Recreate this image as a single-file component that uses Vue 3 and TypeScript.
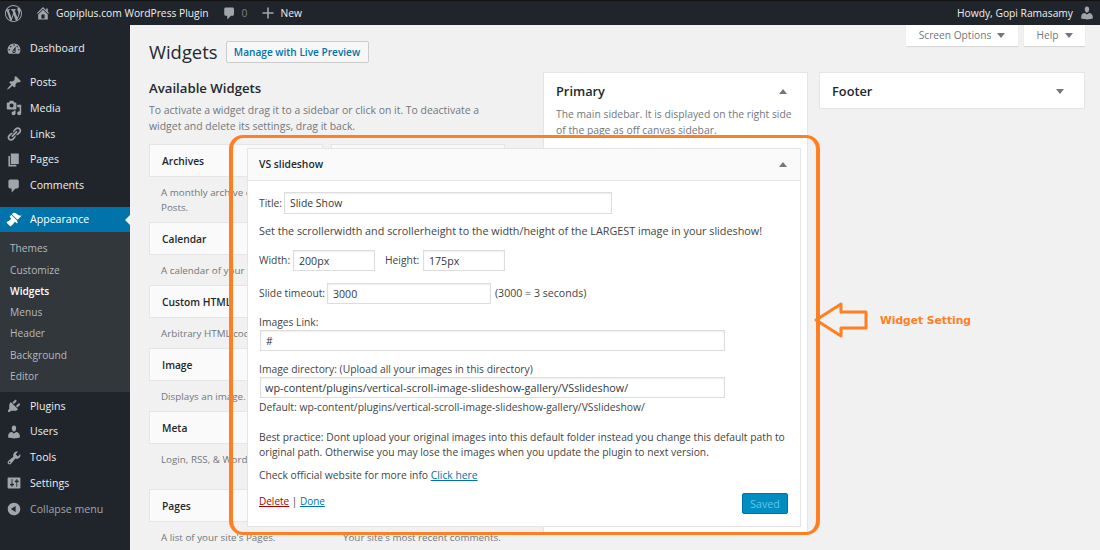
<script setup lang="ts">
interface MenuItem {
  label: string
  icon: string
  group?: boolean
  active?: boolean
  muted?: boolean
}

const ICONS: Record<string, string> = {
  wp: 'M20 10c0-5.51-4.49-10-10-10C4.48 0 0 4.49 0 10c0 5.52 4.48 10 10 10 5.51 0 10-4.48 10-10zM7.78 15.37L4.37 6.22c.55-.02 1.17-.08 1.17-.08.5-.06.44-1.13-.06-1.11 0 0-1.45.11-2.37.11-.18 0-.37 0-.58-.01C4.12 2.69 6.87 1.11 10 1.11c2.33 0 4.45.87 6.05 2.34-.68-.11-1.65.39-1.65 1.58 0 .74.45 1.36.9 2.1.35.61.55 1.36.55 2.46 0 1.49-1.4 5-1.4 5l-3.03-8.37c.54-.02.82-.17.82-.17.5-.05.44-1.25-.06-1.22 0 0-1.44.12-2.38.12-.87 0-2.33-.12-2.33-.12-.5-.03-.56 1.2-.06 1.22l.92.08 1.26 3.41zM17.41 10c.24-.64.74-1.87.43-4.25.7 1.29 1.05 2.71 1.05 4.25 0 3.29-1.73 6.24-4.4 7.78.97-2.59 1.94-5.2 2.92-7.78zM6.1 18.09C3.12 16.65 1.11 13.53 1.11 10c0-1.3.23-2.48.72-3.59C3.25 10.3 4.67 14.2 6.1 18.09zm4.03-6.63l2.58 6.98c-.86.29-1.76.45-2.71.45-.79 0-1.57-.11-2.29-.33.81-2.38 1.62-4.74 2.42-7.1z',
  home: 'M16 8.5l1.53 1.53-1.06 1.06L10 4.62l-6.47 6.47-1.06-1.06L10 2.5l4 4v-2h2v4zm-6-2.46l6 5.99V18H4v-5.97zM12 17v-5H8v5h4z',
  plus: 'M17 9v2h-6v6H9v-6H3V9h6V3h2v6h6z',
  dashboard: 'M3.76 16h12.48c1.1-1.37 1.76-3.11 1.76-5 0-4.42-3.58-8-8-8s-8 3.58-8 8c0 1.89.66 3.63 1.76 5zM10 4c.55 0 1 .45 1 1s-.45 1-1 1-1-.45-1-1 .45-1 1-1zM6 6c.55 0 1 .45 1 1s-.45 1-1 1-1-.45-1-1 .45-1 1-1zm8 0c.55 0 1 .45 1 1s-.45 1-1 1-1-.45-1-1 .45-1 1-1zm-5.37 5.55L12 7v6c0 1.1-.9 2-2 2s-2-.9-2-2c0-.57.24-1.08.63-1.45zM4 10c.55 0 1 .45 1 1s-.45 1-1 1-1-.45-1-1 .45-1 1-1zm12 0c.55 0 1 .45 1 1s-.45 1-1 1-1-.45-1-1 .45-1 1-1zm-5 3c0-.55-.45-1-1-1s-1 .45-1 1 .45 1 1 1 1-.45 1-1z',
  post: 'M10.44 3.02l1.82-1.82 6.36 6.35-1.83 1.82c-1.05-.68-2.48-.57-3.41.36l-.75.75c-.92.93-1.04 2.35-.35 3.41l-1.83 1.82-2.41-2.41-2.8 2.79c-.42.42-3.38 2.71-3.8 2.29s1.86-3.39 2.28-3.81l2.79-2.79L4.1 9.36l1.83-1.82c1.05.69 2.48.57 3.4-.36l.75-.75c.93-.92 1.05-2.35.36-3.41z',
  media: 'M13 11V4c0-.55-.45-1-1-1h-1.67L9 1H5L3.67 3H2c-.55 0-1 .45-1 1v7c0 .55.45 1 1 1h10c.55 0 1-.45 1-1zM7 4.5c1.38 0 2.5 1.12 2.5 2.5S8.38 9.5 7 9.5 4.5 8.38 4.5 7 5.62 4.5 7 4.5zM14 6h5v10.5c0 1.38-1.12 2.5-2.5 2.5S14 17.88 14 16.5s1.12-2.5 2.5-2.5c.17 0 .34.02.5.05V9h-3V6zm-4 8.05V13h2v3.5c0 1.38-1.12 2.5-2.5 2.5S7 17.88 7 16.5 8.12 14 9.5 14c.17 0 .34.02.5.05z',
  links: 'M17.74 2.76c1.68 1.69 1.68 4.41 0 6.1l-1.53 1.52c-1.12 1.12-2.7 1.47-4.14 1.09l2.62-2.61.76-.77.76-.76c.84-.84.84-2.2 0-3.04-.84-.85-2.2-.85-3.04 0l-.77.76-3.38 3.38c-.37-1.44-.02-3.02 1.1-4.14l1.52-1.53c1.69-1.68 4.42-1.68 6.1 0zM8.59 13.43l5.34-5.34c.42-.42.42-1.1 0-1.52-.44-.43-1.13-.39-1.53 0l-5.33 5.34c-.42.42-.42 1.1 0 1.52.44.43 1.13.39 1.52 0zm-.76 2.29l4.14-4.15c.38 1.44.03 3.02-1.09 4.14l-1.52 1.53c-1.69 1.68-4.41 1.68-6.1 0-1.68-1.68-1.68-4.42 0-6.1l1.53-1.52c1.12-1.12 2.7-1.47 4.14-1.1l-4.14 4.15c-.85.84-.85 2.2 0 3.05.84.84 2.2.84 3.04 0z',
  page: 'M6 15V2h10v13H6zm-1 1h8v2H3V5h2v11z',
  comments: 'M5 2h9c1.1 0 2 .9 2 2v7c0 1.1-.9 2-2 2h-2l-5 5v-5H5c-1.1 0-2-.9-2-2V4c0-1.1.9-2 2-2z',
  appearance: 'M14.48 11.06L7.41 3.99l1.5-1.5c.5-.56 2.3-.47 3.51.32 1.21.8 1.43 1.28 2.91 2.1 1.18.64 2.45 1.26 4.45.85zm-.71.71L6.7 4.7 4.93 6.47c-.39.39-.39 1.02 0 1.41l1.06 1.06c.39.39.39 1.03 0 1.42-.6.6-1.43 1.11-2.21 1.69-.35.26-.7.53-1.01.84C1.43 13.23.4 14.37 1.1 15.07l3.84 3.83c.7.7 1.83-.33 3.19-1.68.3-.31.57-.66.84-1.01.58-.78 1.09-1.61 1.69-2.21.39-.39 1.02-.39 1.41 0l1.06 1.06c.39.39 1.02.39 1.41 0z',
  plugins: 'M13.11 4.36L9.87 7.6 8 5.73l3.24-3.24c.35-.34 1.05-.2 1.56.32.52.51.66 1.21.31 1.55zm-8 1.77l.91-1.12 9.01 9.01-1.19.84c-.71.71-2.63 1.16-3.82 1.16H6.14L4.9 17.26c-.59.59-1.54.59-2.12 0-.59-.58-.59-1.53 0-2.12l1.24-1.24v-3.88c0-1.13.4-3.19 1.09-3.89zm7.26 3.97l3.24-3.24c.34-.35 1.04-.21 1.55.31.52.51.66 1.21.31 1.55l-3.24 3.25z',
  users: 'M10 9.25c-2.27 0-2.73-3.44-2.73-3.44C7 4.02 7.82 2 9.97 2c2.16 0 2.98 2.02 2.71 3.81 0 0-.41 3.44-2.68 3.44zm0 2.57L12.72 10c2.39 0 4.52 2.33 4.52 4.53v2.49s-3.65 1.13-7.24 1.13c-3.65 0-7.24-1.13-7.24-1.13v-2.49c0-2.25 1.94-4.48 4.47-4.48z',
  tools: 'M16.68 9.77c-1.34 1.34-3.3 1.67-4.95.99l-5.41 6.52c-.99.99-2.59.99-3.58 0s-.99-2.59 0-3.57l6.52-5.42c-.68-1.65-.35-3.61.99-4.95 1.28-1.28 3.12-1.62 4.72-1.06l-2.89 2.89 2.82 2.82 2.86-2.87c.53 1.58.18 3.39-1.08 4.65zM3.81 16.21c.4.39 1.04.39 1.43 0 .4-.4.4-1.04 0-1.43-.39-.4-1.03-.4-1.43 0-.39.39-.39 1.03 0 1.43z',
  settings: 'M18 16V4c0-.55-.45-1-1-1H3c-.55 0-1 .45-1 1v12c0 .55.45 1 1 1h14c.55 0 1-.45 1-1zM8 11h1c.55 0 1 .45 1 1s-.45 1-1 1H8v1.5c0 .28-.22.5-.5.5s-.5-.22-.5-.5V13H6c-.55 0-1-.45-1-1s.45-1 1-1h1V5.5c0-.28.22-.5.5-.5s.5.22.5.5V11zm5-2h-1c-.55 0-1-.45-1-1s.45-1 1-1h1V5.5c0-.28.22-.5.5-.5s.5.22.5.5V7h1c.55 0 1 .45 1 1s-.45 1-1 1h-1v5.5c0 .28-.22.5-.5.5s-.5-.22-.5-.5V9z',
  collapse: 'M10 2.16c4.33 0 7.84 3.51 7.84 7.84s-3.51 7.84-7.84 7.84S2.16 14.33 2.16 10 5.71 2.16 10 2.16zm2 11.72V6.12L6.18 9.97z',
}

const topMenu: MenuItem[] = [
  { label: 'Dashboard', icon: 'dashboard', group: true },
  { label: 'Posts', icon: 'post' },
  { label: 'Media', icon: 'media' },
  { label: 'Links', icon: 'links' },
  { label: 'Pages', icon: 'page' },
  { label: 'Comments', icon: 'comments', group: true },
  { label: 'Appearance', icon: 'appearance', active: true },
]

const bottomMenu: MenuItem[] = [
  { label: 'Plugins', icon: 'plugins' },
  { label: 'Users', icon: 'users' },
  { label: 'Tools', icon: 'tools' },
  { label: 'Settings', icon: 'settings' },
  { label: 'Collapse menu', icon: 'collapse', muted: true },
]

const subMenu = ['Themes', 'Customize', 'Widgets', 'Menus', 'Header', 'Background', 'Editor']

const widgets = [
  { name: 'Archives', desc: "A monthly archive of your site's Posts.", tall: true },
  { name: 'Audio', desc: 'Displays an audio player.', tall: true },
  { name: 'Calendar', desc: "A calendar of your site's Posts." },
  { name: 'Categories', desc: 'A list of categories.' },
  { name: 'Custom HTML', desc: 'Arbitrary HTML code.' },
  { name: 'Gallery', desc: 'Displays an image gallery.' },
  { name: 'Image', desc: 'Displays an image.' },
  { name: 'Navigation Menu', desc: 'Add a navigation menu.' },
  { name: 'Meta', desc: 'Login, RSS, & WordPress.org links.', tall: true, oneLine: true },
  { name: 'Recent Posts', desc: 'Your site’s most recent Posts.', tall: true },
  { name: 'Pages', desc: "A list of your site's Pages." },
  { name: 'Recent Comments', desc: "Your site's most recent comments.", oneLine: true },
]
</script>

<template>
  <div class="page">
    <header class="adminbar">
      <div class="bar-left">
        <svg class="bar-wp" viewBox="0 0 20 20"><path :d="ICONS.wp" /></svg>
        <svg class="bar-icon home" viewBox="0 0 20 20"><path :d="ICONS.home" /></svg>
        <span class="bar-text">Gopiplus.com WordPress Plugin</span>
        <svg class="bar-icon bubble" viewBox="0 0 20 20"><path :d="ICONS.comments" /></svg>
        <span class="bar-count">0</span>
        <svg class="bar-icon plus" viewBox="0 0 20 20"><path :d="ICONS.plus" /></svg>
        <span class="bar-text">New</span>
      </div>
      <div class="bar-right">
        <span class="bar-text">Howdy, Gopi Ramasamy</span>
        <svg class="bar-icon user" viewBox="0 0 20 20"><path :d="ICONS.users" /></svg>
      </div>
    </header>

    <div class="wrap">
      <nav class="sidebar">
        <ul class="menu">
          <li
            v-for="item in topMenu"
            :key="item.label"
            class="menu-item"
            :class="{ group: item.group, active: item.active }"
          >
            <svg class="menu-icon" viewBox="0 0 20 20"><path :d="ICONS[item.icon]" /></svg>
            <span>{{ item.label }}</span>
          </li>
        </ul>
        <ul class="submenu">
          <li v-for="sub in subMenu" :key="sub" :class="{ current: sub === 'Widgets' }">{{ sub }}</li>
        </ul>
        <ul class="menu lower">
          <li
            v-for="item in bottomMenu"
            :key="item.label"
            class="menu-item"
            :class="{ muted: item.muted }"
          >
            <svg class="menu-icon" viewBox="0 0 20 20"><path :d="ICONS[item.icon]" /></svg>
            <span>{{ item.label }}</span>
          </li>
        </ul>
      </nav>

      <main class="content">
        <div class="screen-tabs">
          <div class="screen-tab options">Screen Options <i class="caret" /></div>
          <div class="screen-tab help">Help <i class="caret" /></div>
        </div>

        <div class="title-row">
          <h1>Widgets</h1>
          <button class="live-btn">Manage with Live Preview</button>
        </div>

        <div class="columns">
          <section class="available">
            <h2>Available Widgets</h2>
            <p class="intro">
              To activate a widget drag it to a sidebar or click on it. To deactivate a widget and delete its settings, drag it back.
            </p>
            <div class="widget-grid">
              <div v-for="w in widgets" :key="w.name" class="widget" :class="{ tall: w.tall }">
                <div class="widget-card">{{ w.name }}</div>
                <p class="widget-desc" :class="{ 'one-line': w.oneLine }">{{ w.desc }}</p>
              </div>
            </div>
          </section>

          <section class="sidebar-box primary">
            <div class="box-head">
              <h3>Primary</h3>
              <i class="caret up" />
            </div>
            <p class="box-desc">The main sidebar. It is displayed on the right side of the page as off canvas sidebar.</p>
          </section>

          <section class="sidebar-box footer">
            <div class="box-head">
              <h3>Footer</h3>
              <i class="caret" />
            </div>
          </section>
        </div>
      </main>
    </div>

    <div class="popup">
      <div class="popup-head">
        <span>VS slideshow</span>
        <i class="caret up" />
      </div>
      <form class="popup-body" @submit.prevent>
        <div class="row title">
          <label>Title:</label>
          <input class="field title-field" value="Slide Show" readonly />
        </div>
        <p class="line scroller">Set the scrollerwidth and scrollerheight to the width/height of the LARGEST image in your slideshow!</p>
        <div class="row size">
          <label>Width:</label>
          <input class="field small" value="200px" readonly />
          <label class="second">Height:</label>
          <input class="field small" value="175px" readonly />
        </div>
        <div class="row timeout">
          <label>Slide timeout:</label>
          <input class="field timeout-field" value="3000" readonly />
          <span class="timeout-note">(3000 = 3 seconds)</span>
        </div>
        <p class="line block-label">Images Link:</p>
        <input class="field wide" value="#" readonly />
        <p class="line block-label">Image directory: (Upload all your images in this directory)</p>
        <input class="field wide path" value="wp-content/plugins/vertical-scroll-image-slideshow-gallery/VSslideshow/" readonly />
        <p class="line default-path">Default: wp-content/plugins/vertical-scroll-image-slideshow-gallery/VSslideshow/</p>
        <p class="line best">
          Best practice: Dont upload your original images into this default folder instead you change this default path to original path. Otherwise you may lose the images when you update the plugin to next version.
        </p>
        <p class="line check">Check official website for more info <a href="#">Click here</a></p>
        <div class="popup-foot">
          <span class="foot-links"><a class="delete" href="#">Delete</a> | <a href="#">Done</a></span>
          <button class="saved" disabled>Saved</button>
        </div>
      </form>
    </div>

    <div class="frame" />
    <svg class="arrow" viewBox="0 0 54 36">
      <path d="M2 18 L27 2 V10 H52 V26 H27 V34 Z" />
    </svg>
    <span class="arrow-label">Widget Setting</span>
  </div>
</template>

<style>
html,
body {
  margin: 0;
  background: #f1f1f1;
}
</style>

<style scoped>
.page {
  position: relative;
  width: 1100px;
  height: 550px;
  overflow: hidden;
  background: #f1f1f1;
  color: #444;
  font-family: 'Open Sans', sans-serif;
  font-size: 10.6px;
  line-height: 15px;
}

ul {
  list-style: none;
  margin: 0;
  padding: 0;
}

h1,
h2,
h3,
p {
  margin: 0;
}

svg path {
  fill: currentColor;
}

.adminbar {
  display: flex;
  justify-content: space-between;
  align-items: center;
  height: 25px;
  box-sizing: border-box;
  border-top: 1px solid #111;
  background: #20252c;
  color: #eee;
  font-size: 10.25px;
}

.bar-left,
.bar-right {
  display: flex;
  align-items: center;
}

.bar-wp {
  width: 17px;
  height: 17px;
  margin-left: 5px;
  color: #a0a5aa;
}

.bar-icon {
  color: #a0a5aa;
}

.home {
  width: 16px;
  height: 16px;
  margin: 0 5px 0 13px;
}

.bubble {
  width: 15px;
  height: 15px;
  margin-left: 13px;
}

.bar-count {
  margin: 0 13px 0 5px;
  color: #7d8287;
}

.plus {
  width: 16px;
  height: 16px;
  margin-right: 4px;
}

.user {
  width: 16px;
  height: 16px;
  margin: 0 5px 0 6px;
}

.wrap {
  display: flex;
  height: 525px;
}

.sidebar {
  flex: none;
  width: 130px;
  padding-top: 11px;
  box-sizing: border-box;
  background: #20252c;
  color: #eee;
}

.menu-item {
  position: relative;
  display: flex;
  align-items: center;
  height: 25.75px;
  padding-left: 6px;
  gap: 8px;
}

.menu-item.group {
  margin-bottom: 8px;
}

.menu-item.active {
  background: #0073aa;
  color: #fff;
}

.menu-item.active::after {
  content: '';
  position: absolute;
  right: 0;
  top: 8px;
  border: 5px solid transparent;
  border-right-color: #f1f1f1;
  border-left-width: 0;
}

.menu-item.muted {
  color: #a0a5aa;
}

.menu-icon {
  flex: none;
  width: 16px;
  height: 16px;
  color: #a0a5aa;
}

.active .menu-icon {
  color: #fff;
}

.submenu {
  padding: 6px 0 5px;
  background: #32373c;
  color: #b4b9be;
  font-size: 10.2px;
}

.submenu li {
  height: 21.3px;
  line-height: 21.3px;
  padding-left: 10px;
}

.submenu .current {
  color: #fff;
  font-weight: 600;
}

.lower {
  margin-top: 1px;
}

.content {
  flex: 1;
  min-width: 0;
  padding: 0 15px 0 19px;
}

.screen-tabs {
  display: flex;
  justify-content: flex-end;
  gap: 6px;
  height: 21px;
  font-size: 10.2px;
}

.screen-tab {
  display: flex;
  align-items: center;
  justify-content: center;
  gap: 6px;
  background: #fff;
  color: #72777c;
  box-shadow: 0 1px 1px rgba(0, 0, 0, 0.1);
}

.options {
  width: 112px;
}

.help {
  width: 61px;
}

.caret {
  width: 0;
  height: 0;
  border-left: 4px solid transparent;
  border-right: 4px solid transparent;
  border-top: 5px solid #72777c;
}

.caret.up {
  border-top: 0;
  border-bottom: 5px solid #72777c;
}

.title-row {
  display: flex;
  align-items: center;
  gap: 8px;
  margin-top: -5px;
  height: 22px;
}

h1 {
  color: #23282d;
  font-size: 18.4px;
  font-weight: 400;
  line-height: 22px;
}

.live-btn {
  height: 22px;
  width: 143px;
  padding: 0;
  border: 1px solid #ccc;
  border-radius: 2px;
  background: #f7f7f7;
  color: #0073aa;
  font: 600 10.1px 'Open Sans', sans-serif;
}

.columns {
  display: flex;
  margin-top: 9px;
}

.available {
  flex: none;
  width: 356px;
  margin-right: 38px;
}

h2 {
  margin-top: 8px;
  color: #23282d;
  font-size: 13.2px;
  font-weight: 600;
  line-height: 16px;
}

.intro {
  margin-top: 6px;
  color: #72777c;
  font-size: 10.45px;
  line-height: 16px;
}

.widget-grid {
  display: grid;
  grid-template-columns: 174px 174px;
  column-gap: 8px;
  margin-top: 10px;
}

.widget {
  height: 63px;
}

.widget.tall {
  height: 78px;
}

.widget-card {
  height: 33px;
  padding-left: 12px;
  line-height: 33px;
  background: #fafafa;
  border: 1px solid #e5e5e5;
  box-sizing: border-box;
  color: #23282d;
  font-size: 10.25px;
  font-weight: 600;
}

.widget-desc {
  padding: 8px 0 0 12px;
  color: #72777c;
  font-size: 9.8px;
}

.widget-desc.one-line {
  white-space: nowrap;
}

.sidebar-box {
  flex: none;
  box-sizing: border-box;
  background: #fff;
  border: 1px solid #e5e5e5;
}

.primary {
  width: 265px;
  height: 461px;
  margin-right: 11px;
  padding: 0 12px;
}

.footer {
  width: 266px;
  height: 37px;
  padding: 0 12px;
}

.box-head {
  display: flex;
  align-items: center;
  justify-content: space-between;
  height: 36px;
  padding-right: 8px;
}

h3 {
  color: #23282d;
  font-size: 12.8px;
  font-weight: 600;
}

.box-desc {
  margin-top: -3px;
  color: #72777c;
  font-size: 10.35px;
  line-height: 16px;
}

/* overlays */
.popup {
  position: absolute;
  left: 247px;
  top: 148px;
  width: 554px;
  height: 379px;
  box-sizing: border-box;
  background: #fff;
  border: 1px solid #e5e5e5;
  font-size: 10.3px;
}

.popup-head {
  display: flex;
  align-items: center;
  justify-content: space-between;
  box-sizing: border-box;
  height: 32px;
  padding: 0 13px 0 11px;
  background: #fafafa;
  border-bottom: 1px solid #e5e5e5;
  color: #23282d;
  font-weight: 600;
}

.popup-body {
  padding: 11px 12px 0 11px;
}

.row {
  display: flex;
  align-items: center;
}

.field {
  box-sizing: border-box;
  height: 21px;
  padding: 0 5px;
  border: 1px solid #ddd;
  box-shadow: inset 0 1px 2px rgba(0, 0, 0, 0.07);
  color: #32373c;
  font: 10.4px 'Open Sans', sans-serif;
  outline: none;
}

.title.row label {
  width: 25px;
}

.title-field {
  width: 328px;
  height: 22px;
}

.line {
  height: 15px;
}

.scroller {
  margin-top: 9px;
  height: 16px;
  line-height: 16px;
  font-size: 10.8px;
  white-space: nowrap;
}

.size {
  margin-top: 11px;
}

.size label {
  width: 34px;
}

.size .second {
  width: 38px;
  margin-left: 10px;
}

.small {
  width: 82px;
  font-size: 10.6px;
}

.timeout {
  margin-top: 12px;
}

.timeout label {
  width: 68px;
}

.timeout-field {
  width: 164px;
  margin-right: 4px;
  font-size: 10.6px;
}

.timeout-note {
  font-size: 10.6px;
}

.block-label {
  margin-top: 10px;
  height: 16px;
  line-height: 16px;
}

.wide {
  display: block;
  width: 465px;
  margin-left: 1px;
}

.wide.path {
  padding: 0 4px;
  font-size: 10.84px;
}

.default-path {
  margin-top: 1px;
  height: 16px;
  line-height: 16px;
}

.best {
  margin-top: 15px;
  height: 30px;
}

.check {
  margin-top: 8px;
}

a {
  color: #0073aa;
}

.popup-foot {
  display: flex;
  justify-content: space-between;
  margin-top: 10px;
}

.foot-links {
  font-size: 10px;
  line-height: 16px;
}

a.delete {
  color: #a00;
}

.saved {
  width: 46px;
  height: 21px;
  padding: 0;
  border: 1px solid #0073aa;
  border-radius: 2px;
  background: #008ec2;
  color: #66c6e4;
  font: 10.6px 'Open Sans', sans-serif;
}

.frame {
  position: absolute;
  left: 229px;
  top: 135px;
  width: 591px;
  height: 400px;
  box-sizing: border-box;
  border-style: solid;
  border-color: #ff7f22;
  border-width: 3.3px 4px;
  border-radius: 14px;
}

.arrow {
  position: absolute;
  left: 814px;
  top: 302px;
  width: 54px;
  height: 36px;
}

.arrow path {
  fill: none;
  stroke: #ff7f22;
  stroke-width: 3;
  stroke-linejoin: round;
}

.arrow-label {
  position: absolute;
  left: 880px;
  top: 313px;
  color: #ff7f22;
  font-family: 'DejaVu Sans', sans-serif;
  font-size: 10.7px;
  font-weight: 700;
}
</style>
